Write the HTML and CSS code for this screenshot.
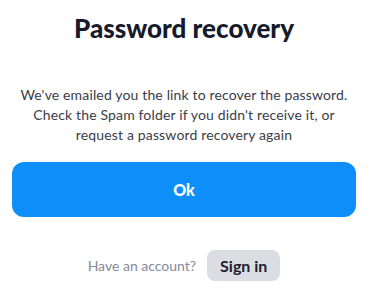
FILE: index.html
```html
<!DOCTYPE html>
<html lang="en">
<head>
  <meta charset="UTF-8" />
  <meta name="viewport" content="width=device-width, initial-scale=1.0" />
  <title>Password recovery</title>
  <link rel="stylesheet" href="styles.css">
</head>
<body>
  <!-- Recovery card -->
  <div class="recovery">
    <h1>Password recovery</h1>
    <p class="message">
      We've emailed you the link to recover the password.<br>
      Check the Spam folder if you didn't receive it, or<br>
      request a password recovery again
    </p>
    <button class="ok-btn">Ok</button>
    <div class="signin-row">
      <span class="hint">Have an account?</span>
      <button class="signin-btn">Sign in</button>
    </div>
  </div>
</body>
</html>
```

FILE: styles.css
```css
* {
  margin: 0;
  padding: 0;
  box-sizing: border-box;
  font-family: 'Lato', 'Open Sans', sans-serif;
}

body {
  background: #fff;
  width: 388px;
  height: 294px;
  overflow: hidden;
}

.recovery {
  width: 368px;
  padding: 12px 12px 0;
  display: flex;
  flex-direction: column;
  align-items: center;
}

h1 {
  color: #161a2b;
  font-size: 26px;
  font-weight: 900;
  line-height: 32px;
}

.message {
  margin-top: 41px;
  color: #3a3d48;
  font-size: 14px;
  letter-spacing: 0.15px;
  line-height: 20px;
  text-align: center;
  white-space: nowrap;
}

.ok-btn {
  margin-top: 17px;
  width: 100%;
  height: 55px;
  border: none;
  border-radius: 12px;
  background: #0d8ef9;
  color: #fff;
  font-size: 16px;
  font-weight: 900;
  cursor: pointer;
}

.signin-row {
  margin-top: 33px;
  display: flex;
  align-items: center;
  gap: 11px;
}

.hint {
  color: #858a9c;
  font-size: 14px;
}

.signin-btn {
  height: 31px;
  padding: 0 13px;
  border: none;
  border-radius: 8px;
  background: #dcdde3;
  color: #1e2030;
  font-size: 16px;
  font-weight: 700;
  cursor: pointer;
}
```
